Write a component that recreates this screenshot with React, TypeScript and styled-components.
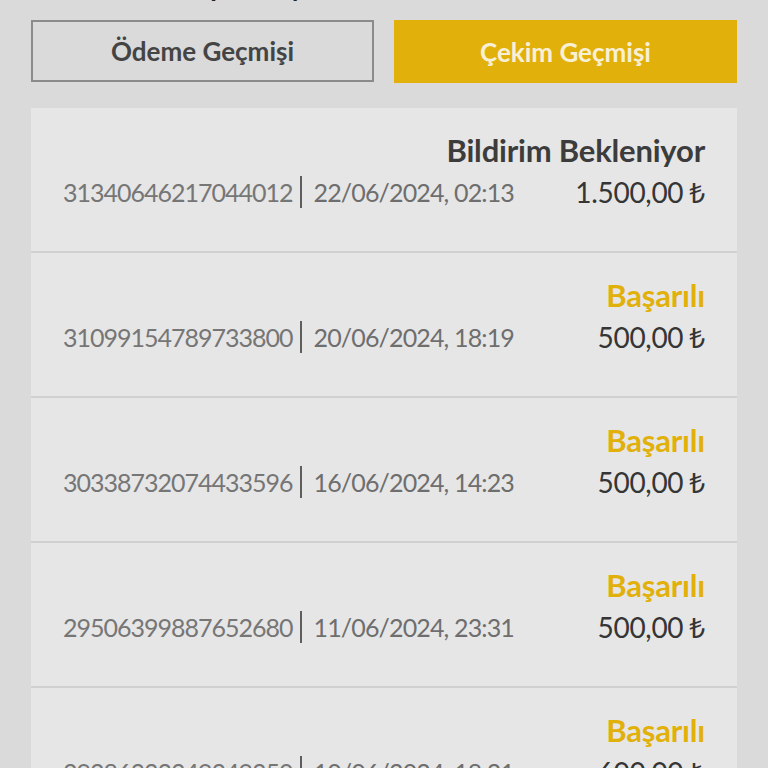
import React from "react";
import styled, { createGlobalStyle } from "styled-components";

const Global = createGlobalStyle`
  html, body { margin: 0; padding: 0; background: #dadada; }
  body { font-family: Lato, "Noto Sans", "DejaVu Sans", sans-serif; }
  * { box-sizing: border-box; }
`;

const Page = styled.div`
  width: 768px;
  height: 768px;
  overflow: hidden;
  background: #dadada;
  padding: 0 31px;
  display: flex;
  flex-direction: column;
  & > * { flex-shrink: 0; }
`;

const Title = styled.h1`
  margin: -28px 0 0;
  height: 28px;
  padding-left: 119px;
  font-size: 27px;
  line-height: 30px;
  font-weight: 700;
  color: #222;
`;

const Tabs = styled.div`
  margin-top: 20px;
  display: grid;
  grid-template-columns: 1fr 1fr;
  gap: 20px;
  align-items: start;
`;

const Tab = styled.button<{ $active?: boolean }>`
  height: ${(p) => (p.$active ? "63px" : "62px")};
  border: ${(p) => (p.$active ? "none" : "2px solid #8b8b8b")};
  background: ${(p) => (p.$active ? "#e2b00a" : "#dadada")};
  color: ${(p) => (p.$active ? "#f8f0d6" : "#444444")};
  font-family: Lato, "Noto Sans", sans-serif;
  font-size: 26px;
  font-weight: 700;
  letter-spacing: 0px;
  padding: 0;
  display: flex;
  align-items: center;
  justify-content: center;
`;

const List = styled.div`
  margin-top: 25px;
  background: #e6e6e6;
  display: flex;
  flex-direction: column;
`;

const Row = styled.div`
  height: 145px;
  flex-shrink: 0;
  padding: 26px 32px 0;
  border-bottom: 2px solid #d0d0d0;
  display: flex;
  flex-direction: column;
`;

const Status = styled.div<{ $tone: "pending" | "success" }>`
  text-align: right;
  font-size: 31px;
  line-height: 32px;
  font-weight: 700;
  letter-spacing: -0.2px;
  color: ${(p) => (p.$tone === "success" ? "#e2b00a" : "#3c3c3c")};
`;

const Line = styled.div`
  margin-top: 6px;
  height: 40px;
  display: flex;
  align-items: center;
`;

const Id = styled.span`
  font-size: 25px;
  letter-spacing: -1px;
  color: #767676;
`;

const Divider = styled.span`
  width: 2px;
  height: 32px;
  background: #5e5e5e;
  margin: 0 12px 0 7px;
`;

const DateText = styled.span`
  font-size: 25px;
  letter-spacing: -0.85px;
  color: #6e6e6e;
`;

const Amount = styled.span`
  margin-left: auto;
  font-size: 28px;
  letter-spacing: -0.3px;
  color: #353535;
`;

const Lira = styled.span`
  font-family: "Noto Sans", "DejaVu Sans", sans-serif;
  margin-left: 6px;
`;

type Item = {
  id: string;
  date: string;
  amount: string;
  status: string;
  tone: "pending" | "success";
};

const items: Item[] = [
  { id: "31340646217044012", date: "22/06/2024, 02:13", amount: "1.500,00", status: "Bildirim Bekleniyor", tone: "pending" },
  { id: "31099154789733800", date: "20/06/2024, 18:19", amount: "500,00", status: "Başarılı", tone: "success" },
  { id: "30338732074433596", date: "16/06/2024, 14:23", amount: "500,00", status: "Başarılı", tone: "success" },
  { id: "29506399887652680", date: "11/06/2024, 23:31", amount: "500,00", status: "Başarılı", tone: "success" },
  { id: "29286333349349350", date: "10/06/2024, 18:21", amount: "600,00", status: "Başarılı", tone: "success" },
];

export default function App() {
  return (
    <>
      <Global />
      <Page>
        <Title>Hesap Detayı</Title>
        <Tabs>
          <Tab>Ödeme Geçmişi</Tab>
          <Tab $active>Çekim Geçmişi</Tab>
        </Tabs>
        <List>
          {items.map((it) => (
            <Row key={it.id}>
              <Status $tone={it.tone}>{it.status}</Status>
              <Line>
                <Id>{it.id}</Id>
                <Divider />
                <DateText>{it.date}</DateText>
                <Amount>
                  {it.amount}
                  <Lira>₺</Lira>
                </Amount>
              </Line>
            </Row>
          ))}
        </List>
      </Page>
    </>
  );
}
